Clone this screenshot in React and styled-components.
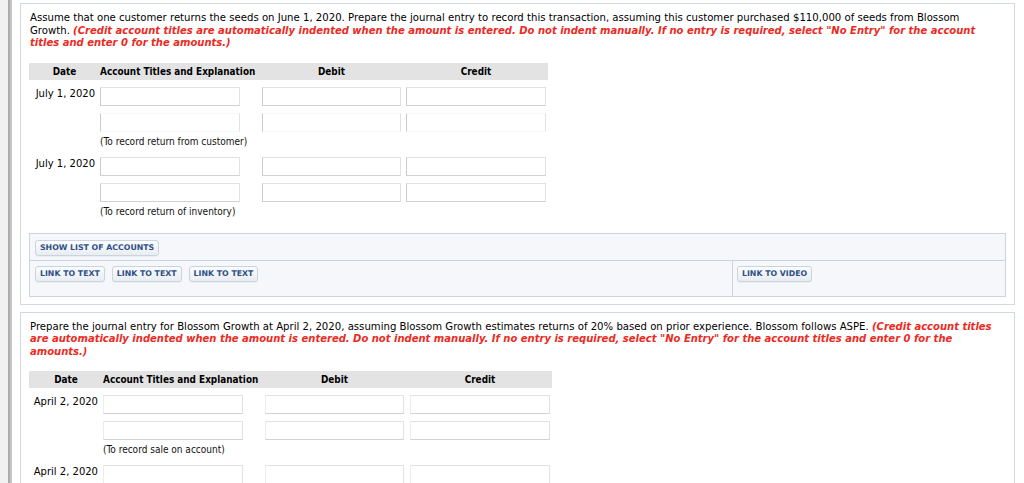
import React from 'react';
import styled, { createGlobalStyle } from 'styled-components';

const GlobalStyle = createGlobalStyle`
  html, body { margin: 0; padding: 0; background: #fff; }
  body { font-family: "DejaVu Sans", Verdana, sans-serif; color: #000; }
  * { box-sizing: border-box; }
`;

const Page = styled.div`
  display: flex;
  min-height: 483px;
`;

const Gutter = styled.div`
  flex: none;
  width: 8px;
  background: #f1f1f1;
`;

const Rail = styled.div`
  flex: none;
  width: 4px;
  background: #c6c6c6;
  border-left: 2px solid #adadad;
`;

const Content = styled.main`
  flex: 1;
  padding: 3px 9px 0 8px;
  display: flex;
  flex-direction: column;
  gap: 7px;
`;

const Panel = styled.section`
  border: 1px solid #d3d9e1;
  background: #fff;
  padding: 8px 8px 7px;
`;

const Question = styled.p`
  margin: 0 0 0 1px;
  font-size: 10.15px;
  line-height: 12.5px;
  white-space: nowrap;
`;

const Hint = styled.em`
  color: #ec2a22;
  font-weight: bold;
  font-style: italic;
  font-size: 10px;
`;

const Journal = styled.div`
  margin-top: 13px;
  display: flex;
  flex-direction: column;
  width: max-content;
`;

const HeaderRow = styled.div`
  display: grid;
  grid-template-columns: ${(p) => p.$cols};
  height: 17px;
  align-items: center;
  background: #e3e3e3;
  font-family: "DejaVu Sans Condensed", "Liberation Sans", sans-serif;
  font-weight: bold;
  font-size: 9.9px;
`;

const HeadLabel = styled.div`
  text-align: ${(p) => p.$align || 'left'};
  width: ${(p) => (p.$w ? `${p.$w}px` : 'auto')};
  white-space: nowrap;
`;

const EntryRow = styled.div`
  display: grid;
  grid-template-columns: ${(p) => p.$cols};
  padding-top: 7px;
`;

const DateCell = styled.div`
  font-size: 10px;
  line-height: 12px;
  text-align: right;
  padding: 1px 5px 0 0;
  white-space: nowrap;
`;

const Field = styled.input`
  display: block;
  width: ${(p) => p.$w || 140}px;
  height: 19px;
  margin: 0;
  padding: 0 3px;
  background: #fff;
  border: 1px solid #e2e2e2;
  border-left-color: ${(p) => (p.$soft ? '#ececec' : '#cacaca')};
  border-bottom-color: #d2d2d2;
  border-top-color: ${(p) => (p.$faint ? '#f8f8f8' : '#e2e2e2')};
  ${(p) => p.$faint && 'border-bottom-color: #f8f8f8;'}
  outline: none;
  font-size: 10px;
`;

const NoteRow = styled.div`
  display: grid;
  grid-template-columns: ${(p) => p.$cols};
  padding: 4px 0 2px;
`;

const Note = styled.div`
  grid-column: 2 / -1;
  font-family: "DejaVu Sans Condensed", "Liberation Sans", sans-serif;
  font-size: 10px;
  line-height: 12px;
  color: #111;
`;

const Resources = styled.div`
  margin-top: 13px;
  border: 1px solid #ccd4de;
  background: #f5f7fa;
`;

const ResourceRow = styled.div`
  display: flex;
  border-top: ${(p) => (p.$first ? 'none' : '1px solid #ccd4de')};
`;

const ResourceCell = styled.div`
  display: flex;
  gap: 7px;
  padding: ${(p) => p.$pad};
  flex: ${(p) => (p.$width ? 'none' : '1')};
  width: ${(p) => (p.$width ? `${p.$width}px` : 'auto')};
  border-left: ${(p) => (p.$divider ? '1px solid #ccd4de' : 'none')};
`;

const ToolButton = styled.button`
  height: 16px;
  padding: 0 4px;
  margin: 0;
  font-family: "DejaVu Sans", Verdana, sans-serif;
  font-weight: bold;
  font-size: 7.8px;
  color: #2d4f86;
  background: linear-gradient(#fbfcfd, #e9edf2);
  border: 1px solid #cbd3dc;
  border-radius: 3px;
  box-shadow: 0 1px 0 rgba(0, 0, 0, 0.04);
  white-space: nowrap;
  cursor: pointer;
`;

const FIELD_W = [140, 139, 140];

function JournalTable({ cols, entries }) {
  return (
    <Journal>
      <HeaderRow $cols={cols}>
        <HeadLabel $align="center">Date</HeadLabel>
        <HeadLabel>Account Titles and Explanation</HeadLabel>
        <HeadLabel $align="center" $w={139}>Debit</HeadLabel>
        <HeadLabel $align="center" $w={140}>Credit</HeadLabel>
      </HeaderRow>
      {entries.map((entry, i) => (
        <React.Fragment key={i}>
          {entry.rows.map((row, j) => (
            <EntryRow key={j} $cols={cols}>
              <DateCell>{j === 0 ? entry.date : ''}</DateCell>
              {FIELD_W.map((w, k) => (
                <div key={k}>
                  <Field $w={w} $faint={row.faint} $soft={row.soft} />
                </div>
              ))}
            </EntryRow>
          ))}
          {entry.note && (
            <NoteRow $cols={cols}>
              <Note>{entry.note}</Note>
            </NoteRow>
          )}
        </React.Fragment>
      ))}
    </Journal>
  );
}

export default function App() {
  return (
    <>
      <GlobalStyle />
      <Page>
        <Gutter />
        <Rail />
        <Content>
          <Panel>
            <Question>
              Assume that one customer returns the seeds on June 1, 2020. Prepare the journal entry to record this transaction, assuming this customer purchased $110,000 of seeds from Blossom
              <br />
              Growth. <Hint>(Credit account titles are automatically indented when the amount is entered. Do not indent manually. If no entry is required, select "No Entry" for the account</Hint>
              <br />
              <Hint>titles and enter 0 for the amounts.)</Hint>
            </Question>
            <JournalTable
              cols="71px 162px 144px 142px"
              entries={[
                { date: 'July 1, 2020', rows: [{}, { faint: true }], note: '(To record return from customer)' },
                { date: 'July 1, 2020', rows: [{}, {}], note: '(To record return of inventory)' },
              ]}
            />
            <Resources>
              <ResourceRow $first>
                <ResourceCell $pad="6px 5px 4px">
                  <ToolButton>SHOW LIST OF ACCOUNTS</ToolButton>
                </ResourceCell>
              </ResourceRow>
              <ResourceRow>
                <ResourceCell $pad="5px 5px 14px" $width={702}>
                  <ToolButton>LINK TO TEXT</ToolButton>
                  <ToolButton>LINK TO TEXT</ToolButton>
                  <ToolButton>LINK TO TEXT</ToolButton>
                </ResourceCell>
                <ResourceCell $pad="5px 4px 14px" $divider>
                  <ToolButton>LINK TO VIDEO</ToolButton>
                </ResourceCell>
              </ResourceRow>
            </Resources>
          </Panel>
          <Panel>
            <Question>
              Prepare the journal entry for Blossom Growth at April 2, 2020, assuming Blossom Growth estimates returns of 20% based on prior experience. Blossom follows ASPE. <Hint>(Credit account titles</Hint>
              <br />
              <Hint>are automatically indented when the amount is entered. Do not indent manually. If no entry is required, select "No Entry" for the account titles and enter 0 for the</Hint>
              <br />
              <Hint>amounts.)</Hint>
            </Question>
            <JournalTable
              cols="74px 162px 145px 142px"
              entries={[
                { date: 'April 2, 2020', rows: [{ soft: true }, { soft: true }], note: '(To record sale on account)' },
                { date: 'April 2, 2020', rows: [{ soft: true }, { soft: true }] },
              ]}
            />
          </Panel>
        </Content>
      </Page>
    </>
  );
}
